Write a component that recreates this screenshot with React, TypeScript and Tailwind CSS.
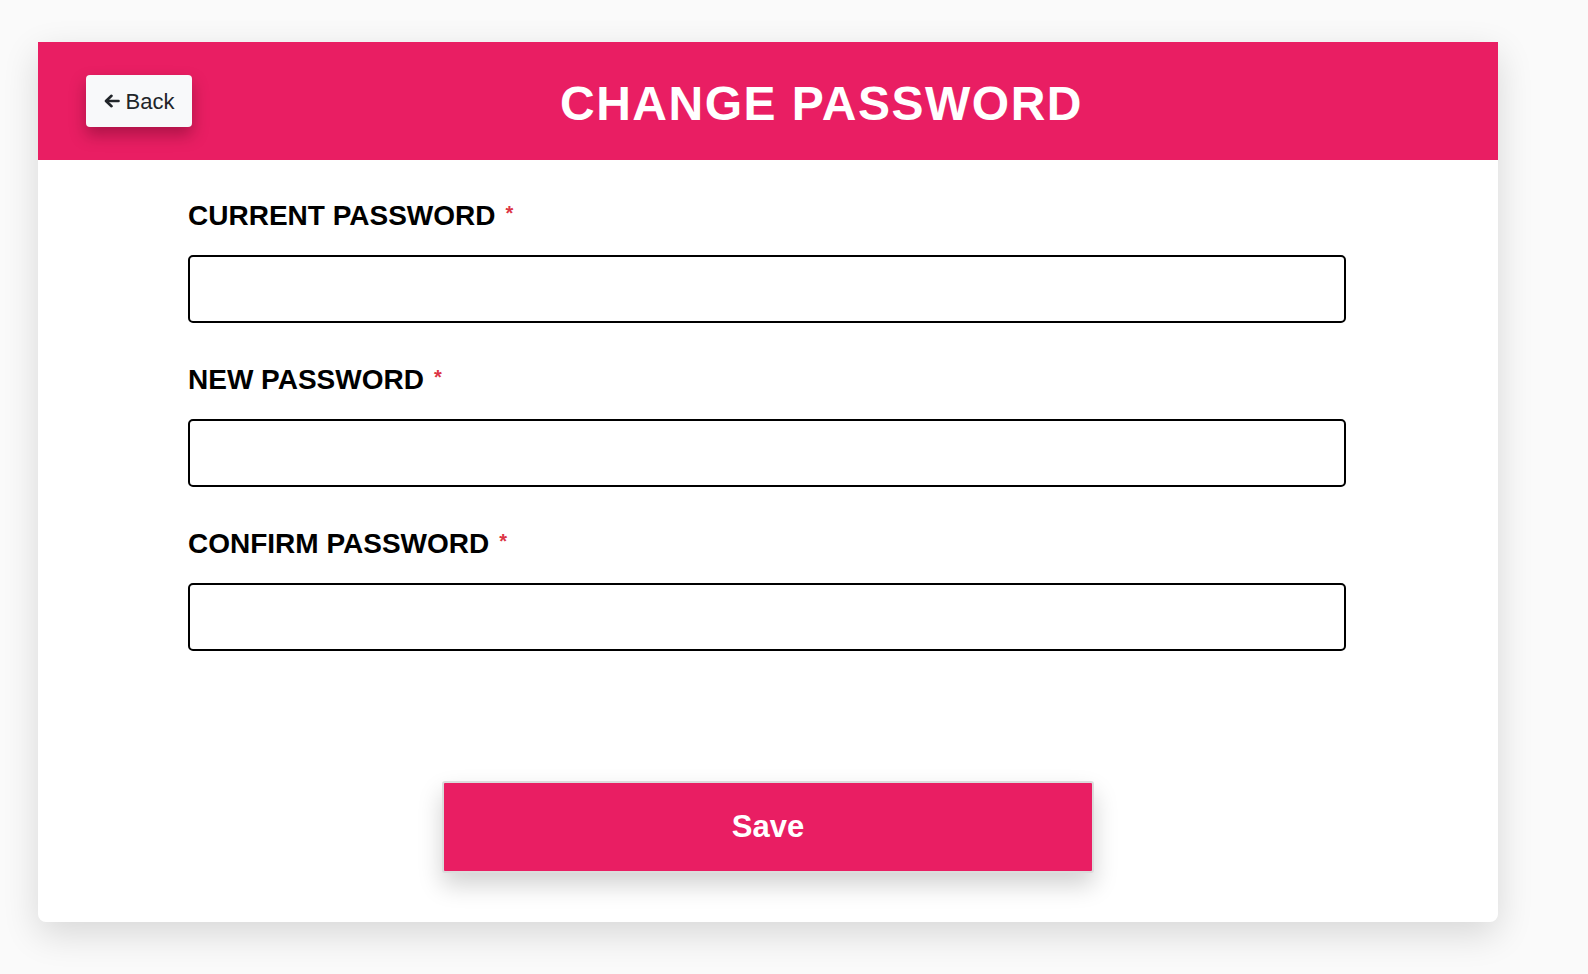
const fields = ["CURRENT PASSWORD", "NEW PASSWORD", "CONFIRM PASSWORD"];

function BackArrow() {
    return (
        <svg width="16" height="14" viewBox="0 0 16 14" fill="none" stroke="currentColor" strokeWidth="2.6" strokeLinecap="round" strokeLinejoin="round">
            <path d="M7.5 1.8 L2 7 L7.5 12.2" />
            <path d="M2.5 7 H14.5" />
        </svg>
    );
}

export default function App() {
    return (
        <div className="min-h-screen bg-[#fafafa] pt-[42px] pl-[38px] font-['Liberation_Sans',Arial,sans-serif]">
            <div className="w-[1460px] bg-white rounded-b-lg shadow-[0_12px_36px_rgba(0,0,0,0.14)]">
                {/* Header */}
                <div className="h-[118px] bg-[#e91e63] flex items-center pl-12">
                    <button className="w-[106px] h-[52px] bg-[#f8f9fa] rounded flex items-center justify-center gap-[6px] text-[#212529] text-[22px] shadow-[0_8px_16px_rgba(60,0,20,0.35)]">
                        <BackArrow />
                        <span>Back</span>
                    </button>
                    <h1 className="ml-[368px] mt-[5px] text-white font-bold text-[48px] tracking-[1.5px] leading-none">
                        CHANGE PASSWORD
                    </h1>
                </div>

                {/* Form */}
                <div className="pl-[150px] pr-[152px] pt-[40px]">
                    {fields.map((label, index) => (
                        <div key={index} className={index === 0 ? "" : "mt-[41px]"}>
                            <label className="flex items-start h-[32px] mb-[23px] text-black font-bold text-[28px] leading-[32px]">
                                {label}
                                <span className="ml-[10px] mt-[1px] text-[#dc3545] text-[20px] leading-[24px] font-bold">*</span>
                            </label>
                            <input
                                type="password"
                                className="block w-full h-[68px] border-2 border-black rounded-[5px] px-4 text-xl outline-none"
                            />
                        </div>
                    ))}
                </div>

                {/* Save */}
                <div className="flex justify-center pt-[130px] pb-[49px]">
                    <button className="w-[652px] h-[92px] bg-[#e91e63] border-2 border-[#dcdcdc] rounded-[3px] text-white font-bold text-[31px] shadow-[0_12px_24px_rgba(0,0,0,0.18)]">
                        Save
                    </button>
                </div>
            </div>
        </div>
    );
}
